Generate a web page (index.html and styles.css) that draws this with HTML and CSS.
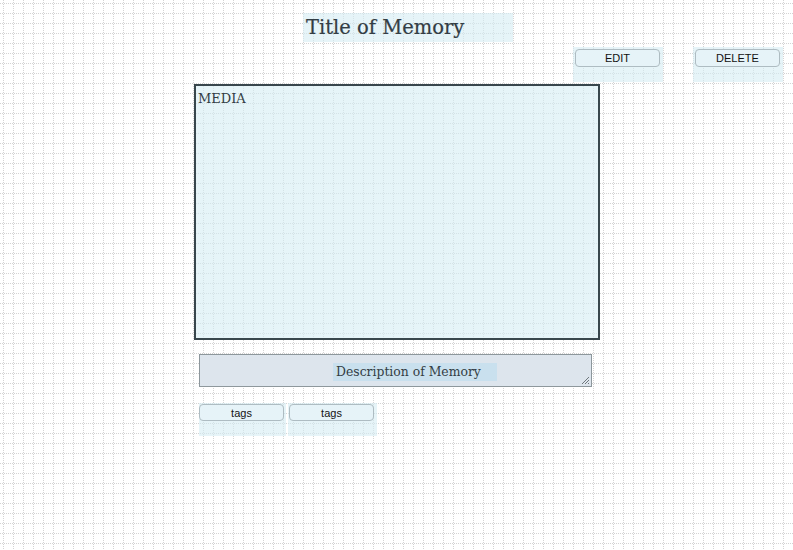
FILE: index.html
```html
<!DOCTYPE html>
<html>
<head>
<meta charset="utf-8">
<link rel="stylesheet" href="styles.css">
</head>
<body>
<div class="page">
  <div class="title-row">
    <h1 class="title">Title of Memory</h1>
  </div>
  <div class="actions">
    <div class="btn-wrap"><button class="btn">EDIT</button></div>
    <div class="btn-wrap"><button class="btn">DELETE</button></div>
  </div>
  <div class="media">MEDIA</div>
  <div class="desc">
    <span class="desc-text">Description of Memory</span>
    <svg class="grip" width="9" height="9" viewBox="0 0 9 9"><path d="M8 1L1 8M8 4L4 8M8 7L7 8" stroke="#6f777c" stroke-width="1"/></svg>
  </div>
  <div class="tags">
    <div class="tag-wrap"><button class="tag">tags</button></div>
    <div class="tag-wrap tag-wrap-wide"><button class="tag">tags</button></div>
  </div>
</div>
</body>
</html>
```
FILE: styles.css
```css
html, body {
  margin: 0;
  padding: 0;
}
body {
  width: 793px;
  height: 550px;
  background-color: #ffffff;
  background-image: url("data:image/svg+xml,%3Csvg xmlns='http://www.w3.org/2000/svg' width='10' height='10'%3E%3Cpath d='M3.5 0V10M0 3.5H10' stroke='%23d3d3d3' stroke-width='1' stroke-dasharray='1 1'/%3E%3C/svg%3E");
  font-family: "DejaVu Serif", Georgia, serif;
  color: #333d44;
  overflow: hidden;
}
.page {
  padding-top: 13px;
}
.title-row {
  padding-left: 303px;
}
.title {
  margin: 0;
  width: 207px;
  height: 29px;
  padding-left: 3px;
  font-weight: normal;
  font-size: 19.5px;
  line-height: 30px;
  background: rgba(214, 236, 244, 0.6);
  color: #333d44;
  -webkit-text-stroke: 0.2px #333d44;
}
.actions {
  display: flex;
  justify-content: flex-end;
  gap: 30px;
  padding-right: 10px;
  margin-top: 5px;
}
.btn-wrap {
  width: 86px;
  height: 33px;
  padding: 2px 2px 0 2px;
  background: rgba(214, 236, 244, 0.6);
}
.btn, .tag {
  display: block;
  box-sizing: border-box;
  width: 85px;
  height: 18px;
  margin: 0;
  padding: 0;
  border: 1px solid #aebcc2;
  border-radius: 4px;
  background: #e6f3f8;
  font-family: "Liberation Sans", Arial, sans-serif;
  font-size: 11px;
  color: #111;
  line-height: 16px;
}
.media {
  margin: 2px 0 0 194px;
  width: 402px;
  height: 247px;
  padding-top: 5px;
  text-indent: 2px;
  border: 2px solid #38464c;
  background: rgba(214, 236, 244, 0.6);
  font-size: 13px;
  line-height: 16px;
}
.desc {
  position: relative;
  margin: 14px 0 0 199px;
  width: 391px;
  height: 31px;
  border: 1px solid #8d979c;
  background: #dde5ed;
  display: flex;
  align-items: center;
}
.desc-text {
  box-sizing: border-box;
  width: 164px;
  height: 18px;
  margin-left: 133px;
  margin-top: 2px;
  padding-left: 3px;
  font-size: 12.4px;
  line-height: 18px;
  background: #c9e0ee;
}
.grip {
  position: absolute;
  right: 1px;
  bottom: 1px;
}
.tags {
  display: flex;
  margin: 16px 0 0 199px;
  gap: 2px;
}
.tag-wrap {
  width: 87px;
  height: 32px;
  padding-top: 1px;
  background: rgba(214, 236, 244, 0.6);
}
.tag-wrap-wide {
  width: 88px;
  padding-left: 1px;
}
.tag {
  height: 17px;
}
```
